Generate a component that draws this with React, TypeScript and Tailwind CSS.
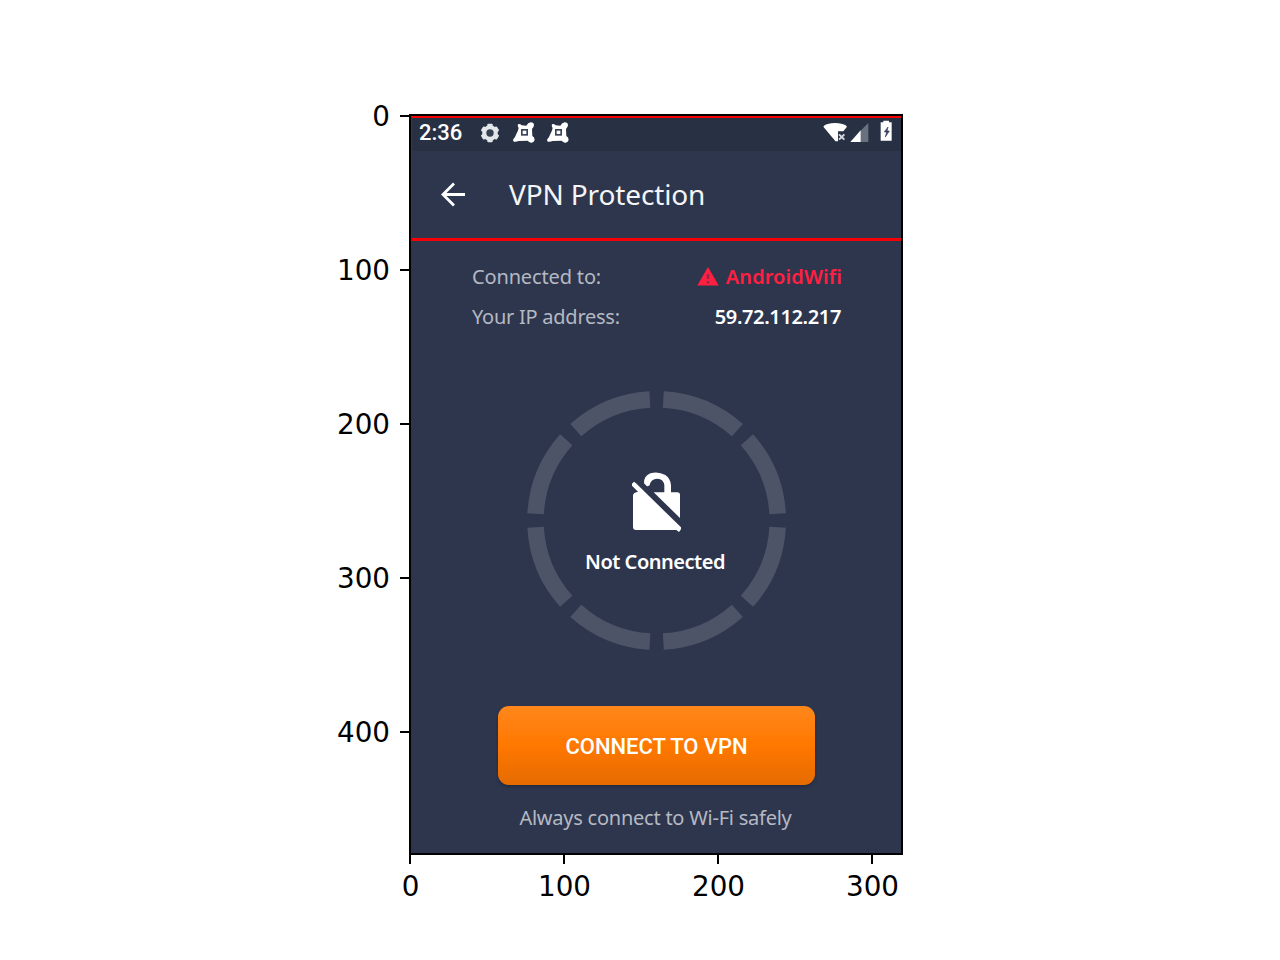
const Y_TICKS = [0, 100, 200, 300, 400];
const X_TICKS = [0, 100, 200, 300];

function Gear() {
  return (
    <svg className="h-5 w-5" viewBox="-10 -10 20 20">
      <g fill="#e4e7ea">
        {[0, 60, 120].map((a) => (
          <rect key={a} x="-2.7" y="-9.2" width="5.4" height="18.4" rx="1" transform={`rotate(${a})`} />
        ))}
        <circle r="7.8" />
      </g>
      <circle r="3.7" fill="#354052" />
    </svg>
  );
}

function Splat() {
  return (
    <svg className="h-[22px] w-[22px]" viewBox="0 0 66 66">
      <path
        d="M15 7 Q20 4 26 10 L40 11 Q45 2 53 1 Q63 1 63 10 Q62 17 57 21 L58 42 Q65 45 65 54 Q62 63 54 62 Q48 61 44 56 L17 57 Q10 60 3 59 Q-2 56 2 50 Q7 45 10 36 Q15 28 17 18 Q13 12 15 7Z"
        fill="#fff"
      />
      <rect x="26.5" y="23.5" width="16" height="15" fill="#fff" stroke="#39445a" strokeWidth="5" />
    </svg>
  );
}

function StatusIcons() {
  return (
    <svg className="h-[25px] w-[72px]" viewBox="0 0 216 75">
      <path d="M1 23 Q4 17 14 15 Q36 9 58 15 Q69 17 72 23 L61 37 H45 V67 H37 Q33 60 26 53 Q12 36 1 23Z" fill="#fff" />
      <path d="M48 46 L64 62 M64 46 L48 62" stroke="#d4d8dd" strokeWidth="6" />
      <path d="M136 12 V69 H112 V36Z" fill="#697180" />
      <path d="M113 34 V69 H82Z" fill="#fff" />
      <path d="M181 5 H198 V10 H206 V65 H173 V10 H181Z" fill="#fff" />
      <path d="M195 24 L184 39 H191 L187 54 L199 36 H192Z" fill="#39435a" stroke="#39435a" strokeWidth="2" />
    </svg>
  );
}

function BackArrow() {
  return (
    <svg className="h-[26px] w-[26px]" viewBox="0 0 26 26" fill="none" stroke="#fff" strokeWidth="2.8">
      <path d="M25 13.5 H3 M14 2.5 L3 13.5 L14 24.5" />
    </svg>
  );
}

function Warning() {
  return (
    <svg className="-mt-[2px] h-[19px] w-[22px]" viewBox="0 0 22 19">
      <path d="M11 0 L21.7 18.5 H0.3Z" fill="#ff1f41" />
      <path d="M11 7 V12 M11 14 V16.5" stroke="#8e2947" strokeWidth="2.4" />
    </svg>
  );
}

function Lock() {
  return (
    <svg className="mr-[2px] h-[80px] w-[90px]" viewBox="0 0 270 240" fill="#fff">
      <path d="M72 65 L78 70 L213 202 L213 208 L207 216 L199 210 H78 Q69 210 69 201 V106 Q70 99 79 97 L84 95 L66 77 V71Z" />
      <path d="M131 97 H202 Q210 97 210 105 V174Z" />
      <path d="M110 78 L102 70 Q101 48 121 40 Q144 33 166 45 Q182 56 183 76 V99 H163 V76 Q161 57 142 56 Q122 57 119 76 L113 79Z" />
    </svg>
  );
}

function Ring() {
  return (
    <svg className="col-start-1 row-start-1 h-[261px] w-[261px]" viewBox="0 0 261 261">
      <circle
        cx="130.6"
        cy="130.5"
        r="121.2"
        fill="none"
        stroke="#4d5467"
        strokeWidth="16.5"
        pathLength="360"
        strokeDasharray="38.6 6.4"
        strokeDashoffset="-3.2"
      />
    </svg>
  );
}

function Phone() {
  return (
    <div className="flex h-[741px] w-[494px] flex-col border-2 border-black bg-[#2e364e] font-['Noto_Sans',sans-serif]">
      <header className="flex h-[125px] flex-col border-t-2 border-b-3 border-l border-t-[#f00000] border-b-[#f40006] border-l-[#c00008]">
        <div className="flex h-[33px] items-start bg-[#283143] pr-[6px] pl-[7px]">
          <span className="w-[61px] pt-[3px] font-['Roboto',sans-serif] text-[22px] leading-[24px] font-medium text-white">
            2:36
          </span>
          <div className="flex items-center pt-[4px]">
            <Gear />
            <span className="ml-[13px]"><Splat /></span>
            <span className="ml-[12px]"><Splat /></span>
          </div>
          <div className="ml-auto pt-[1px]">
            <StatusIcons />
          </div>
        </div>
        <div className="flex h-[87px] items-center pb-[2px] pl-[28px]">
          <BackArrow />
          <h1 className="ml-[43px] text-[28px] leading-[36px] tracking-[-0.13px] whitespace-nowrap text-[#f4f5f7]">VPN Protection</h1>
        </div>
      </header>
      <main className="flex flex-1 flex-col items-center">
        <dl className="ml-[2px] flex w-[370px] flex-col pt-[16px] text-[20px] leading-[40px] whitespace-nowrap">
          <div className="flex h-10 items-center justify-between">
            <dt className="tracking-[-0.15px] text-[#b5b9c2]">Connected to:</dt>
            <dd className="flex items-center gap-[7px] font-semibold tracking-[0.08px] text-[#ff1f41]">
              <Warning />
              AndroidWifi
            </dd>
          </div>
          <div className="flex h-10 items-center justify-between">
            <dt className="tracking-[-0.25px] text-[#b5b9c2]">Your IP address:</dt>
            <dd className="pr-[1px] font-semibold tracking-[-0.36px] text-white">59.72.112.217</dd>
          </div>
        </dl>
        <div className="mt-[53px] grid h-[261px] w-[261px]">
          <Ring />
          <div className="col-start-1 row-start-1 flex flex-col items-center pt-[70px]">
            <Lock />
            <p className="mt-[8px] mr-[2px] text-[20px] leading-[28px] font-semibold tracking-[-0.48px] whitespace-nowrap text-white">Not Connected</p>
          </div>
        </div>
        <button className="mt-[55px] h-[79px] w-[317px] rounded-[11px] bg-linear-to-b from-[#ff8719] via-[#ff7800] to-[#e56b00] pt-[2px] pl-[1px] font-['Roboto',sans-serif] text-[22px] font-medium tracking-[-0.04px] text-white shadow-[0_2px_3px_#232a3f]">
          CONNECT TO VPN
        </button>
        <p className="mt-[19px] mr-[1px] text-[20px] leading-[28px] tracking-[-0.24px] whitespace-nowrap text-[#b5b9c2]">Always connect to Wi-Fi safely</p>
      </main>
    </div>
  );
}

export default function App() {
  return (
    <div className="h-[960px] w-[1280px] overflow-hidden bg-white font-['DejaVu_Sans',sans-serif] text-[27.78px] text-black">
      <div className="flex h-[855px] items-start">
        <div className="w-[409px] pt-[39px]">
          {Y_TICKS.map((t) => (
            <div key={t} className="flex h-[154px] items-center justify-end">
              <span className="mr-[10px] pt-[2px] leading-[32px]">{t}</span>
              <span className="h-[2px] w-[9px] bg-black" />
            </div>
          ))}
        </div>
        <div className="pt-[114px]">
          <Phone />
        </div>
      </div>
      <div className="flex pl-[333px]">
        {X_TICKS.map((t) => (
          <div key={t} className="flex w-[154px] flex-col items-center">
            <span className="h-[9px] w-[2px] bg-black" />
            <span className="mt-[7px] ml-[1px] leading-[32px]">{t}</span>
          </div>
        ))}
      </div>
    </div>
  );
}
